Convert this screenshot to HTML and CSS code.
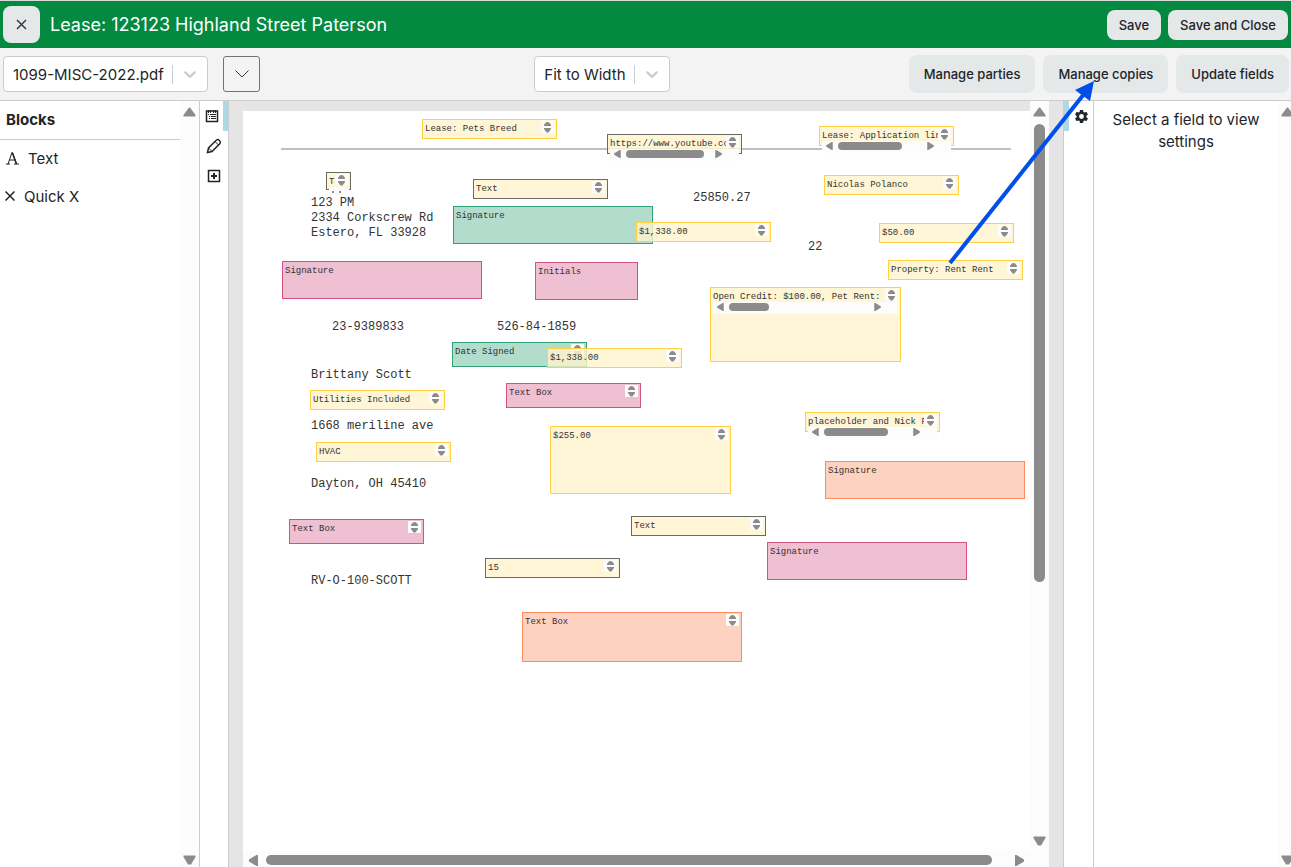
FILE: index.html
```
<!DOCTYPE html>
<html lang="en">
<head>
  <meta charset="UTF-8">
  <meta name="viewport" content="width=device-width, initial-scale=1.0">
  <title>Lease: 123123 Highland Street Paterson</title>
  <link rel="stylesheet" href="styles.css">
</head>
<body>
  <!-- Shared icons -->
  <svg class="sprite" aria-hidden="true">
    <symbol id="spin" viewBox="0 0 13 12">
      <path d="M3 5V4C4 2 5 1 6.500 1S9 2 10 4v1zM3 7h7v1L7.500 11.500h-2L3 8z"/>
    </symbol>
    <symbol id="up" viewBox="0 0 13 10"><path d="M6 .5h1L12.500 8v1.500H.5V8z"/></symbol>
    <symbol id="down" viewBox="0 0 13 10"><path d="M.5.5h12V2L8 9.500H5L.5 2z"/></symbol>
    <symbol id="left" viewBox="0 0 9 11"><path d="M9 0v11H7.500L0 6.500v-2L7.500 0z"/></symbol>
    <symbol id="right" viewBox="0 0 9 11"><path d="M0 0h1.500L9 4.500v2L1.500 11H0z"/></symbol>
    <symbol id="chevron" viewBox="0 0 20 20"><path d="M4.516 7.548c.436-.446 1.043-.481 1.576 0L10 11.295l3.908-3.747c.533-.481 1.141-.446 1.574 0 .436.445.408 1.197 0 1.615-.406.418-4.695 4.502-4.695 4.502a1.095 1.095 0 0 1-1.576 0S4.924 9.581 4.516 9.163s-.436-1.170 0-1.615z"/></symbol>
  </svg>

  <div class="app">
    <header class="header">
      <button class="close" aria-label="Close">
        <svg width="11" height="11" viewBox="0 0 11 11"><path d="M1 1l9 9M10 1l-9 9"/></svg>
      </button>
      <h1>Lease: 123123 Highland Street Paterson</h1>
      <button class="btn">Save</button>
      <button class="btn">Save and Close</button>
    </header>

    <div class="toolbar">
      <div class="tools">
        <div class="select">
          <select class="file" aria-label="Document"><option>1099-MISC-2022.pdf</option></select>
          <svg width="20" height="20"><use href="#chevron"/></svg>
        </div>
        <button class="more" aria-label="More">
          <svg width="14" height="8" viewBox="0 0 14 8"><path d="M.5.5L7 7 13.500.5"/></svg>
        </button>
      </div>
      <div class="select zoom">
        <select aria-label="Zoom"><option>Fit to Width</option></select>
        <svg width="20" height="20"><use href="#chevron"/></svg>
      </div>
      <div class="actions">
        <button class="btn">Manage parties</button>
        <button class="btn">Manage copies</button>
        <button class="btn">Update fields</button>
      </div>
    </div>

    <main class="main">
      <aside class="blocks">
        <div class="blocks-body">
          <h2>Blocks</h2>
          <button class="block">
            <svg width="13" height="14" viewBox="0 0 13 14"><path d="M2 13L6 1.500M6 1l4.500 12M3.500 9h6M0 13h4M8 13h5"/><path class="bold" d="M6.500 2l4 11"/></svg>Text
          </button>
          <button class="block quick">
            <svg width="10" height="10" viewBox="0 0 10 10"><path class="bold" d="M.5.5l9 9M9.500.5l-9 9"/></svg>Quick X
          </button>
        </div>
        <div class="vbar"><svg><use href="#up"/></svg><div class="track"></div><svg><use href="#down"/></svg></div>
      </aside>

      <nav class="rail">
        <button class="tab active" aria-label="Blocks">
          <svg width="14" height="14" viewBox="0 0 14 14"><path class="bold" d="M1.500 2h11v10.500h-11z"/><path d="M3.500 1v3M5.500 1v3M8.500 1v3M10.500 1v3M3 5.500h1M5 5.500h6M4 7.500h1M6 7.500h5M4 9.500h1M6 9.500h5"/></svg>
        </button>
        <button class="tab" aria-label="Edit">
          <svg width="16" height="16" viewBox="0 0 16 16"><path class="bold" d="M1.500 14.500l1-4.500 8-8q1.500-1 3 .5t.5 3l-8 8z"/><path d="M2.500 10l3.500 3.500M9 3.500L12.500 7"/></svg>
        </button>
        <button class="tab" aria-label="Add">
          <svg width="14" height="14" viewBox="0 0 14 14"><path class="bold" d="M1.500 1.500h11v11h-11z"/><path class="plus" d="M7 4v6M4 7h6"/></svg>
        </button>
      </nav>

      <section class="viewer">
        <div class="page">
          <div class="rule"></div>

          <div class="field f-pets"><span>Lease: Pets Breed</span><svg><use href="#spin"/></svg></div>
          <div class="field dark f-url"><span>https://www.youtube.co</span><svg><use href="#spin"/></svg>
            <div class="hbar"><svg><use href="#left"/></svg><i></i><svg><use href="#right"/></svg></div></div>
          <div class="field f-app"><span>Lease: Application lin</span><svg><use href="#spin"/></svg>
            <div class="hbar"><svg><use href="#left"/></svg><i></i><svg><use href="#right"/></svg></div></div>
          <div class="field dark f-tiny"><span>Te</span><svg><use href="#spin"/></svg><div class="hbar small"></div></div>
          <div class="field dark f-text1"><span>Text</span><svg><use href="#spin"/></svg></div>
          <div class="field green sign f-sign1"><span>Signature</span></div>
          <div class="field f-rent1"><span>$1,338.00</span><svg><use href="#spin"/></svg></div>
          <div class="field f-nicolas"><span>Nicolas Polanco</span><svg><use href="#spin"/></svg></div>
          <div class="field f-fifty"><span>$50.00</span><svg><use href="#spin"/></svg></div>
          <div class="field f-property"><span>Property: Rent Rent</span><svg><use href="#spin"/></svg></div>
          <div class="field f-credit"><span>Open Credit: $100.00, Pet Rent:</span><svg><use href="#spin"/></svg>
            <div class="hbar"><svg><use href="#left"/></svg><i></i><svg><use href="#right"/></svg></div></div>
          <div class="field pink sign f-sign2"><span>Signature</span></div>
          <div class="field pink sign f-initials"><span>Initials</span></div>
          <div class="field green tall f-date"><span>Date Signed</span><svg><use href="#spin"/></svg></div>
          <div class="field f-rent2"><span>$1,338.00</span><svg><use href="#spin"/></svg></div>
          <div class="field f-utilities"><span>Utilities Included</span><svg><use href="#spin"/></svg></div>
          <div class="field f-hvac"><span>HVAC</span><svg><use href="#spin"/></svg></div>
          <div class="field pink tall f-box1"><span>Text Box</span><svg><use href="#spin"/></svg></div>
          <div class="field f-total"><span>$255.00</span><svg><use href="#spin"/></svg></div>
          <div class="field f-nick"><span>placeholder and Nick P</span><svg><use href="#spin"/></svg>
            <div class="hbar"><svg><use href="#left"/></svg><i></i><svg><use href="#right"/></svg></div></div>
          <div class="field orange sign f-sign3"><span>Signature</span></div>
          <div class="field dark f-text2"><span>Text</span><svg><use href="#spin"/></svg></div>
          <div class="field pink sign f-sign4"><span>Signature</span></div>
          <div class="field pink tall f-box2"><span>Text Box</span><svg><use href="#spin"/></svg></div>
          <div class="field dark f-fifteen"><span>15</span><svg><use href="#spin"/></svg></div>
          <div class="field orange f-box3"><span>Text Box</span><svg><use href="#spin"/></svg></div>

          <p class="print address">123 PM<br>2334 Corkscrew Rd<br>Estero, FL 33928</p>
          <p class="print amount">25850.27</p>
          <p class="print year">22</p>
          <p class="print tin">23-9389833</p>
          <p class="print ssn">526-84-1859</p>
          <p class="print name">Brittany Scott</p>
          <p class="print street">1668 meriline ave</p>
          <p class="print city">Dayton, OH 45410</p>
          <p class="print account">RV-O-100-SCOTT</p>
        </div>
        <div class="vbar"><svg><use href="#up"/></svg><div class="track"><div class="thumb"></div></div><svg><use href="#down"/></svg></div>
        <div class="hscroll"><svg><use href="#left"/></svg><div class="track"><div class="thumb"></div></div><svg><use href="#right"/></svg></div>
      </section>

      <nav class="rail rail-right">
        <button class="tab active" aria-label="Settings">
          <svg class="gear" width="15" height="15" viewBox="1 1 22 22"><path d="M19.140 12.940c.04-.3.060-.61.060-.94s-.02-.64-.07-.94l2.030-1.580a.49.490 0 0 0 .12-.61l-1.920-3.320a.49.490 0 0 0-.59-.22l-2.390.96a7 7 0 0 0-1.620-.94l-.36-2.540a.48.480 0 0 0-.48-.41h-3.840a.47.470 0 0 0-.47.410l-.36 2.540a7.300 7.300 0 0 0-1.620.94l-2.390-.96a.48.480 0 0 0-.59.220L2.740 8.870a.47.470 0 0 0 .12.610l2.030 1.580a6 6 0 0 0 0 1.880l-2.030 1.580a.49.490 0 0 0-.12.610l1.920 3.320c.12.220.37.290.59.220l2.390-.96c.5.380 1.030.7 1.620.94l.36 2.540c.05.240.24.410.48.410h3.840c.24 0 .44-.17.470-.41l.36-2.540a7 7 0 0 0 1.620-.94l2.390.96c.22.080.47 0 .59-.22l1.920-3.320a.47.470 0 0 0-.12-.61zM12 15.600a3.600 3.600 0 1 1 0-7.200 3.600 3.600 0 0 1 0 7.200z"/></svg>
        </button>
      </nav>

      <aside class="settings">
        <p>Select a field to view settings</p>
        <div class="vbar"><svg><use href="#up"/></svg><div class="track"></div><svg><use href="#down"/></svg></div>
      </aside>
    </main>

    <svg class="pointer" width="150" height="190" viewBox="0 0 150 190" aria-hidden="true">
      <path class="shaft" d="M5 185L139 16"/><path class="head" d="M149 3l-19 9 15 11z"/>
    </svg>
  </div>
</body>
</html>
```
FILE: styles.css
```
* {
  box-sizing: border-box;
}

body {
  margin: 0;
  font-family: Inter, sans-serif;
  font-size: 15px;
  color: #212529;
}

h1, h2, p {
  margin: 0;
}

button, select {
  font: inherit;
  color: inherit;
}

svg {
  flex: none;
}

.sprite {
  position: absolute;
  width: 0;
  height: 0;
}

.app {
  position: relative;
  display: flex;
  flex-direction: column;
  height: 100vh;
  overflow: hidden;
}

/* Header */
.header {
  display: flex;
  align-items: center;
  gap: 7px;
  height: 48px;
  padding: 0 3px;
  border-top: 1px solid #d5dfda;
  background: #038a40;
}

.header h1 {
  flex: 1;
  padding-left: 3px;
  font-size: 18px;
  font-weight: 400;
  color: #fff;
}

.btn {
  height: 38px;
  padding: 0 15px;
  border: 0;
  border-radius: 8px;
  background: #e4e8e9;
  font-size: 13px;
  font-weight: 500;
  white-space: nowrap;
}

.header .btn {
  height: 30px;
  padding: 0 12px;
}

.close {
  display: flex;
  align-items: center;
  justify-content: center;
  width: 37px;
  height: 37px;
  padding: 0;
  border: 0;
  border-radius: 8px;
  background: #e4e8e9;
}

.close svg, .more svg {
  fill: none;
  stroke: #343a40;
}

.close svg {
  stroke-width: 1.5;
}

/* Toolbar */
.toolbar {
  display: flex;
  align-items: center;
  justify-content: space-between;
  height: 53px;
  padding: 0 2px 0 3px;
  border-bottom: 1px solid #ccc;
  background: #f3f3f3;
}

.tools {
  display: flex;
  gap: 15px;
}

.actions {
  display: flex;
  gap: 8px;
}

.select {
  position: relative;
}

.select select {
  width: 136px;
  height: 36px;
  padding: 0 43px 0 9px;
  border: 1px solid #ccc;
  border-radius: 4px;
  background: #fff;
  appearance: none;
}

.select .file {
  width: 205px;
}

.select::after {
  content: "";
  position: absolute;
  top: 9px;
  right: 35px;
  width: 1px;
  height: 19px;
  background: #ccc;
}

.select svg {
  position: absolute;
  top: 8px;
  right: 8px;
  width: 20px;
  height: 20px;
  fill: #ccc;
  pointer-events: none;
}

.zoom {
  margin-left: 36px;
}

.more {
  display: flex;
  align-items: center;
  justify-content: center;
  width: 37px;
  height: 36px;
  padding: 0;
  border: 1px solid #6c757d;
  border-radius: 3px;
  background: #f3f3f3;
}

/* Columns */
.main {
  flex: 1;
  min-height: 0;
  display: grid;
  grid-template-columns: 200px 29px 1fr 31px 197px;
}

.blocks {
  display: grid;
  grid-template-columns: 1fr 19px;
  border-right: 1px solid #ccc;
}

.blocks h2 {
  height: 39px;
  padding-left: 6px;
  border-bottom: 1px solid #ccc;
  font-size: 15px;
  line-height: 38px;
}

.block {
  display: flex;
  align-items: center;
  gap: 9px;
  width: 100%;
  height: 38px;
  padding: 0 6px 2px;
  border: 0;
  background: none;
}

.block svg {
  fill: none;
  stroke: #212529;
}

.block.quick {
  padding-left: 5px;
}

.rail {
  border-right: 1px solid #ccc;
}

.rail-right {
  border-left: 1px solid #ccc;
}

.tab {
  display: flex;
  align-items: center;
  justify-content: center;
  width: 100%;
  height: 30px;
  padding: 0;
  border: 0;
  background: none;
}

.tab.active {
  border-right: 5px solid #add8e6;
}

.rail-right .tab.active {
  border-right: 0;
  border-left: 5px solid #add8e6;
}

.tab svg {
  fill: none;
  stroke: #212529;
}

.bold {
  stroke-width: 1.5;
}

.plus {
  stroke-width: 2;
}

.tab .gear {
  fill: #212529;
  stroke: none;
}

.settings {
  display: grid;
  grid-template-columns: 184px 19px;
  overflow: hidden;
}

.settings p {
  padding: 8px 12px;
  line-height: 22px;
  text-align: center;
}

/* Scrollbars */
.vbar {
  display: flex;
  flex-direction: column;
  align-items: center;
  gap: 7px;
  padding: 6px 0 2px;
  background: #fcfcfc;
}

.vbar svg {
  width: 13px;
  height: 10px;
  fill: #8b8b8b;
}

.track {
  flex: 1;
}

.thumb {
  border-radius: 6px;
  background: #8b8b8b;
}

.vbar .thumb {
  width: 11px;
  height: 65%;
}

.hscroll {
  grid-column: 1 / 3;
  display: flex;
  align-items: center;
  gap: 8px;
  padding: 2px 25px 0 6px;
  background: #fcfcfc;
}

.hscroll svg {
  width: 9px;
  height: 11px;
  fill: #8b8b8b;
}

.hscroll .thumb {
  width: 98%;
  height: 10px;
}

/* Document */
.viewer {
  display: grid;
  grid-template-columns: 1fr 19px;
  grid-template-rows: 1fr 16px;
  padding: 0 14px;
  background: #e5e5e5;
}

.viewer .vbar {
  padding-bottom: 5px;
}

.page {
  position: relative;
  margin-top: 10px;
  background: #fff;
}

.rule {
  margin: 37px 19px 0 38px;
  height: 2px;
  background: #c0c0c0;
}

.print {
  position: absolute;
  font: 12px/15px "Liberation Mono", monospace;
  color: #333;
  white-space: nowrap;
}

.address { left: 68px; top: 85px; }
.amount { left: 450px; top: 80px; }
.year { left: 565px; top: 129px; }
.tin { left: 89px; top: 209px; }
.ssn { left: 254px; top: 209px; }
.name { left: 68px; top: 257px; }
.street { left: 68px; top: 308px; }
.city { left: 68px; top: 366px; }
.account { left: 68px; top: 463px; }

.field {
  position: absolute;
  display: flex;
  align-items: flex-start;
  width: 135px;
  height: 20px;
  padding: 1px 2px;
  border: 1px solid #ffd042;
  background: rgba(255, 242, 205, 0.8);
  font: 9px/12px "Liberation Mono", monospace;
  color: #333;
}

.field span {
  flex: 1;
  min-width: 0;
  padding-top: 2px;
  overflow: hidden;
  white-space: nowrap;
}

.field > svg {
  width: 13px;
  height: 12px;
  background: #fcfcfc;
  fill: #8b8b8b;
}

.sign {
  width: 200px;
  height: 38px;
}

.tall {
  height: 25px;
}

.dark {
  border-color: #6b6b62;
}

.green {
  border-color: #2fa377;
  background: #b2dccb;
}

.pink {
  border-color: #d15386;
  background: #efbfd2;
}

.orange {
  border-color: #ff8c5f;
  background: #fed2c0;
}

.hbar {
  position: absolute;
  top: 14px;
  left: 2px;
  right: 2px;
  display: flex;
  align-items: center;
  height: 12px;
  padding: 0 17px 2px 4px;
  background: #fcfcfc;
}

.hbar svg {
  width: 7px;
  height: 8px;
  fill: #8b8b8b;
}

.hbar i {
  width: 64px;
  height: 8px;
  margin: 0 auto 0 5px;
  border-radius: 4px;
  background: #8b8b8b;
}

.hbar.small {
  padding-left: 3px;
}

.hbar.small::before {
  content: "";
  flex: none;
  width: 5px;
  height: 2px;
  border: solid #8b8b8b;
  border-width: 0 2px;
}

.f-pets { left: 179px; top: 8px; }
.f-url { left: 364px; top: 23px; }
.f-url .hbar i { width: 78px; }
.f-app { left: 576px; top: 15px; }
.f-tiny { left: 83px; top: 61px; width: 25px; height: 18px; }
.f-text1 { left: 230px; top: 68px; }
.f-sign1 { left: 210px; top: 95px; }
.f-rent1 { left: 393px; top: 111px; }
.f-nicolas { left: 581px; top: 64px; }
.f-fifty { left: 636px; top: 112px; }
.f-property { left: 645px; top: 149px; }
.f-credit { left: 467px; top: 176px; width: 191px; height: 75px; }
.f-credit .hbar i { width: 40px; }
.f-sign2 { left: 39px; top: 150px; }
.f-initials { left: 292px; top: 151px; width: 103px; }
.f-date { left: 209px; top: 231px; }
.f-rent2 { left: 304px; top: 237px; }
.f-utilities { left: 67px; top: 279px; }
.f-hvac { left: 73px; top: 331px; }
.f-box1 { left: 263px; top: 272px; }
.f-total { left: 307px; top: 315px; width: 181px; height: 68px; }
.f-nick { left: 562px; top: 301px; }
.f-sign3 { left: 582px; top: 350px; }
.f-text2 { left: 388px; top: 405px; }
.f-sign4 { left: 524px; top: 431px; }
.f-box2 { left: 46px; top: 408px; }
.f-fifteen { left: 242px; top: 447px; }
.f-box3 { left: 279px; top: 501px; width: 220px; height: 50px; }

/* Arrow drawn over the page */
.pointer {
  position: absolute;
  top: 78px;
  right: 196px;
  pointer-events: none;
}

.shaft {
  fill: none;
  stroke: #004fea;
  stroke-width: 4;
}

.head {
  fill: #004fea;
}
```
